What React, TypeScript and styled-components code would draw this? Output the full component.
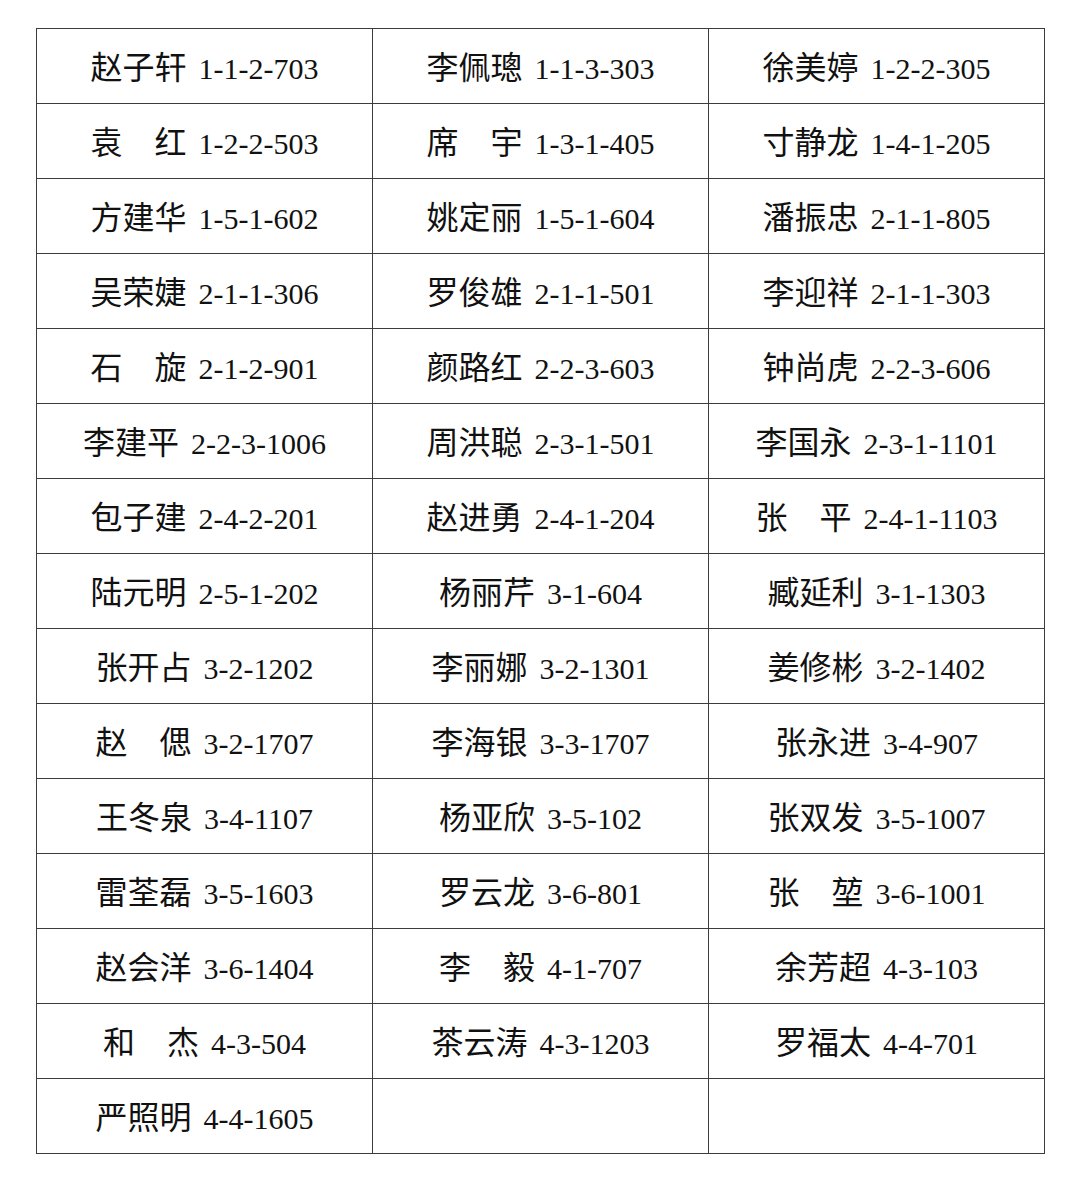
import React from "react";
import styled, { createGlobalStyle } from "styled-components";

const GlobalStyle = createGlobalStyle`
  html, body {
    margin: 0;
    padding: 0;
    background: #ffffff;
  }
`;

const Page = styled.div`
  width: 1080px;
  height: 1185px;
  box-sizing: border-box;
  padding: 28px 0 0 36px;
  background: #ffffff;
`;

const Table = styled.table`
  border-collapse: collapse;
  table-layout: fixed;
  width: 1009px;
  font-family: "Liberation Serif", "Noto Sans CJK SC", serif;
  font-size: 30px;
  color: #111111;
`;

const Cell = styled.td`
  border: 1.5px solid #3c3c3c;
  height: 71px;
  padding: 0 0 3px 0;
  text-align: center;
  vertical-align: middle;
  white-space: nowrap;
`;

const Name = styled.span`
  font-family: "Noto Sans CJK SC", sans-serif;
  font-size: 32px;
  margin-right: 12px;
`;

const entries: [string, string][] = [
  ["赵子轩", "1-1-2-703"],
  ["李佩璁", "1-1-3-303"],
  ["徐美婷", "1-2-2-305"],
  ["袁\u3000红", "1-2-2-503"],
  ["席\u3000宇", "1-3-1-405"],
  ["寸静龙", "1-4-1-205"],
  ["方建华", "1-5-1-602"],
  ["姚定丽", "1-5-1-604"],
  ["潘振忠", "2-1-1-805"],
  ["吴荣婕", "2-1-1-306"],
  ["罗俊雄", "2-1-1-501"],
  ["李迎祥", "2-1-1-303"],
  ["石\u3000旋", "2-1-2-901"],
  ["颜路红", "2-2-3-603"],
  ["钟尚虎", "2-2-3-606"],
  ["李建平", "2-2-3-1006"],
  ["周洪聪", "2-3-1-501"],
  ["李国永", "2-3-1-1101"],
  ["包子建", "2-4-2-201"],
  ["赵进勇", "2-4-1-204"],
  ["张\u3000平", "2-4-1-1103"],
  ["陆元明", "2-5-1-202"],
  ["杨丽芹", "3-1-604"],
  ["臧延利", "3-1-1303"],
  ["张开占", "3-2-1202"],
  ["李丽娜", "3-2-1301"],
  ["姜修彬", "3-2-1402"],
  ["赵\u3000偲", "3-2-1707"],
  ["李海银", "3-3-1707"],
  ["张永进", "3-4-907"],
  ["王冬泉", "3-4-1107"],
  ["杨亚欣", "3-5-102"],
  ["张双发", "3-5-1007"],
  ["雷荃磊", "3-5-1603"],
  ["罗云龙", "3-6-801"],
  ["张\u3000堃", "3-6-1001"],
  ["赵会洋", "3-6-1404"],
  ["李\u3000毅", "4-1-707"],
  ["余芳超", "4-3-103"],
  ["和\u3000杰", "4-3-504"],
  ["茶云涛", "4-3-1203"],
  ["罗福太", "4-4-701"],
  ["严照明", "4-4-1605"],
];

const rows: ([string, string] | null)[][] = [];
for (let i = 0; i < entries.length; i += 3) {
  const row: ([string, string] | null)[] = [];
  for (let j = 0; j < 3; j++) row.push(entries[i + j] ?? null);
  rows.push(row);
}

export default function App() {
  return (
    <>
      <GlobalStyle />
      <Page>
        <Table>
          <tbody>
            {rows.map((row, r) => (
              <tr key={r}>
                {row.map((cell, c) => (
                  <Cell key={c}>
                    {cell && (
                      <>
                        <Name>{cell[0]}</Name>
                        {cell[1]}
                      </>
                    )}
                  </Cell>
                ))}
              </tr>
            ))}
          </tbody>
        </Table>
      </Page>
    </>
  );
}
